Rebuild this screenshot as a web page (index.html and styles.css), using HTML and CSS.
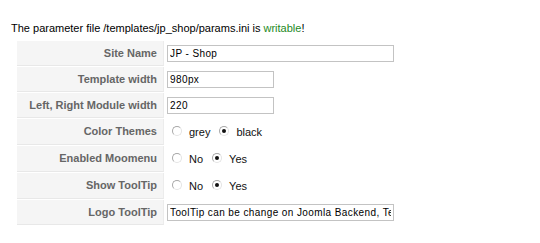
FILE: index.html
```html
<!DOCTYPE html>
<html>
<head>
<meta charset="utf-8">
<title>Template Parameters</title>
<link rel="stylesheet" href="styles.css">
</head>
<body>
<p class="msg">The parameter file /templates/jp_shop/params.ini is <span class="ok">writable</span>!</p>
<div class="params">
  <div class="key">Site Name</div>
  <div class="val"><input class="txt wide" type="text" value="JP - Shop"></div>

  <div class="key">Template width</div>
  <div class="val"><input class="txt short" type="text" value="980px"></div>

  <div class="key">Left, Right Module width</div>
  <div class="val"><input class="txt short" type="text" value="220"></div>

  <div class="key tall">Color Themes</div>
  <div class="val"><label class="opt"><input type="radio" name="theme">grey</label><label class="opt"><input type="radio" name="theme" checked>black</label></div>

  <div class="key tall">Enabled Moomenu</div>
  <div class="val"><label class="opt"><input type="radio" name="moo">No</label><label class="opt"><input type="radio" name="moo" checked>Yes</label></div>

  <div class="key tall">Show ToolTip</div>
  <div class="val"><label class="opt"><input type="radio" name="tip">No</label><label class="opt"><input type="radio" name="tip" checked>Yes</label></div>

  <div class="key">Logo ToolTip</div>
  <div class="val"><input class="txt wide" type="text" value="ToolTip can be change on Joomla Backend, Template Parameters"></div>
</div>
</body>
</html>
```

FILE: styles.css
```css
html, body {
  margin: 0;
  padding: 0;
  background: #fff;
}
body {
  font-family: "Liberation Sans", Arial, sans-serif;
  font-size: 11px;
  line-height: 13px;
  color: #000;
}
.msg {
  margin: 22px 0 6px 11px;
}
.ok {
  color: #1e8a1e;
}
.params {
  display: grid;
  grid-template-columns: 147px 1fr;
  column-gap: 1px;
  row-gap: 1px;
  margin-left: 17px;
}
.key {
  height: 24px;
  box-sizing: content-box;
  background: #f5f5f5;
  border-bottom: 1px solid #e8e8e8;
  border-right: 1px solid #ececec;
  color: #666;
  font-weight: bold;
  text-align: right;
  padding-right: 6px;
  display: flex;
  align-items: center;
  justify-content: flex-end;
  line-height: 13px;
}
.key.tall {
  height: 25px;
}
.val {
  display: flex;
  align-items: center;
  padding-left: 1px;
}
.txt {
  box-sizing: border-box;
  height: 17px;
  margin: 0 0 0 1px;
  padding: 0 2px;
  border: 1px solid #c3c3c3;
  font-family: "Liberation Sans", Arial, sans-serif;
  font-size: 10px;
  letter-spacing: 0.4px;
  color: #000;
  background: #fff;
  outline: none;
}
.wide {
  width: 227px;
}
.short {
  width: 107px;
}
.opt {
  display: inline-flex;
  align-items: center;
  margin-right: 3px;
  color: #111;
}
.opt input {
  -webkit-appearance: none;
  appearance: none;
  box-sizing: border-box;
  width: 10px;
  height: 10px;
  margin: -2px 7px 0 6px;
  border-radius: 50%;
  border: 1px solid;
  border-color: #a8a8a8 #e4e4e4 #e4e4e4 #a8a8a8;
  background: #fff;
  position: relative;
}
.opt input:checked::after {
  content: "";
  position: absolute;
  left: 2px;
  top: 2px;
  width: 4px;
  height: 4px;
  border-radius: 50%;
  background: #111;
}
```
